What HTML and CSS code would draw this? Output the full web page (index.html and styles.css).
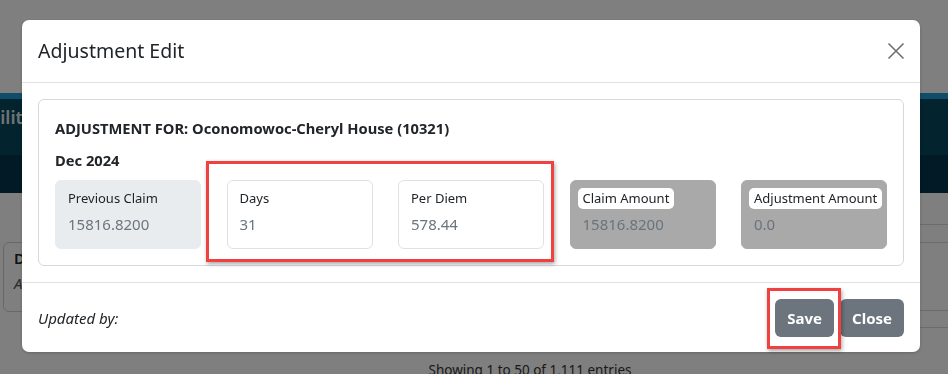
FILE: index.html
```html
<!DOCTYPE html>
<html lang="en">
<head>
<meta charset="utf-8">
<title>Adjustment Edit</title>
<link rel="stylesheet" href="styles.css">
</head>
<body>
<div class="page">
  <div class="topspace"></div>
  <div class="hero">
    <div class="hero-strip"></div>
    <div class="hero-main"><h1 class="hero-title">Facilities</h1></div>
    <div class="hero-sub"></div>
  </div>
  <div class="content">
    <div class="table-rule rule-a"></div>
    <div class="row-area">
      <div class="side-card">
        <div class="side-label">D</div>
        <div class="side-text">A</div>
      </div>
      <div class="table-rows">
        <div class="table-rule"></div>
        <div class="table-rule rule-gap"></div>
        <div class="table-rule rule-b"></div>
      </div>
    </div>
    <div class="showing">Showing 1 to 50 of 1,111 entries</div>
  </div>
</div>

<div class="backdrop"></div>

<div class="modal">
  <div class="modal-header">
    <h5 class="modal-title">Adjustment Edit</h5>
    <button class="btn-close" aria-label="Close">
      <svg width="18" height="18" viewBox="0 0 18 18"><path d="M1.5 1.5 L16.5 16.5 M16.5 1.5 L1.5 16.5" stroke="#6f6f6f" stroke-width="1.6" fill="none"/></svg>
    </button>
  </div>
  <div class="modal-body">
    <div class="card">
      <div class="card-title">ADJUSTMENT FOR: Oconomowoc-Cheryl House (10321)</div>
      <div class="card-period">Dec 2024</div>
      <div class="fields">
        <div class="field field-muted">
          <div class="field-label">Previous Claim</div>
          <div class="field-value">15816.8200</div>
        </div>
        <div class="field">
          <div class="field-label">Days</div>
          <div class="field-value">31</div>
        </div>
        <div class="field">
          <div class="field-label">Per Diem</div>
          <div class="field-value">578.44</div>
        </div>
        <div class="field field-disabled">
          <div class="field-label"><span class="pill">Claim Amount</span></div>
          <div class="field-value">15816.8200</div>
        </div>
        <div class="field field-disabled">
          <div class="field-label"><span class="pill">Adjustment Amount</span></div>
          <div class="field-value">0.0</div>
        </div>
      </div>
    </div>
  </div>
  <div class="modal-footer">
    <div class="updated">Updated by:</div>
    <div class="actions">
      <button class="btn">Save</button>
      <button class="btn">Close</button>
    </div>
  </div>
</div>

<div class="mark mark-fields"></div>
<div class="mark mark-save"></div>
</body>
</html>
```

FILE: styles.css
```css
* { box-sizing: border-box; }
html, body { margin: 0; padding: 0; }
body {
  width: 948px;
  height: 374px;
  overflow: hidden;
  background: #ffffff;
  font-family: "Noto Sans", "Open Sans", sans-serif;
  color: #212529;
  position: relative;
}
.page { width: 948px; }
.topspace { height: 93px; }
.hero-strip { height: 6px; background: #1e9ad4; }
.hero-main { height: 56px; background: #07465f; overflow: hidden; }
.hero-title {
  margin: 0;
  margin-left: -29px;
  padding-top: 6px;
  font-size: 18px;
  font-weight: 600;
  color: #dfe6ea;
  line-height: 24px;
}
.hero-sub { height: 38px; background: #04344a; }
.content { position: relative; }
.table-rule { height: 1px; background: #d9d9d9; }
.rule-a { margin-top: 31px; margin-left: 920px; }
.row-area { display: flex; margin-top: 17px; }
.side-card {
  width: 60px;
  height: 70px;
  margin-left: 3px;
  border: 1px solid #d0d0d0;
  border-radius: 6px;
  padding: 5px 0 0 10px;
  font-size: 15px;
}
.side-label { font-weight: 600; }
.side-text { font-style: italic; margin-top: 5px; color: #555; }
.table-rows { flex: 1; padding-left: 857px; }
.rule-gap { margin-top: 67px; }
.rule-b { margin-top: 16px; }
.showing {
  margin-top: 33px;
  text-align: center;
  padding-left: 112px;
  font-size: 13.5px;
  color: #333;
}

.backdrop {
  position: fixed;
  inset: 0;
  background: rgba(0, 0, 0, 0.5);
}

.modal {
  position: absolute;
  left: 22px;
  top: 20px;
  width: 898px;
  background: #fff;
  border-radius: 7px;
  box-shadow: 0 1px 3px rgba(0,0,0,0.2);
  font-family: "Noto Sans", "Open Sans", sans-serif;
}
.modal-header {
  display: flex;
  align-items: center;
  justify-content: space-between;
  height: 63px;
  padding: 0 14px 0 16px;
  border-bottom: 1px solid #dee2e6;
}
.modal-title {
  margin: 0;
  font-size: 19.5px;
  font-weight: 400;
  line-height: 30px;
  color: #212529;
}
.btn-close {
  border: 0;
  background: transparent;
  padding: 0;
  width: 20px;
  height: 20px;
  display: flex;
  align-items: center;
  justify-content: center;
}
.modal-body { padding: 16px; }
.card {
  border: 1px solid #d6d8db;
  border-radius: 6px;
  padding: 16px;
}
.card-title, .card-period {
  font-size: 14.7px;
  font-weight: 700;
  line-height: 24px;
  color: #212529;
}
.card-title { margin-bottom: 8px; }
.card-period { margin-bottom: 8px; }
.fields {
  display: grid;
  grid-template-columns: repeat(5, 146px);
  column-gap: 25.5px;
}
.field {
  height: 69px;
  border: 1px solid #dee2e6;
  border-radius: 6px;
  padding: 7px 12px 0 12px;
  background: #fff;
}
.field-muted { background: #e9ecef; border-color: #e9ecef; }
.field-disabled { background: #a9a9a9; border-color: #a9a9a9; }
.field-label {
  font-size: 13px;
  line-height: 21px;
  color: #212529;
  white-space: nowrap;
}
.field-value {
  margin-top: 4px;
  font-size: 15px;
  line-height: 22px;
  color: #6c757d;
}
.field-disabled .field-value { color: #6a737c; }
.pill {
  display: inline-block;
  background: #fff;
  border-radius: 5px;
  padding: 0 5px;
  margin-left: -5px;
}
.modal-footer {
  display: flex;
  align-items: center;
  justify-content: space-between;
  height: 70px;
  padding: 0 16px;
  border-top: 1px solid #dee2e6;
}
.updated {
  font-size: 15px;
  font-style: italic;
  color: #212529;
}
.actions { display: flex; gap: 6px; }
.btn {
  height: 38px;
  padding: 0 12px;
  border: 0;
  border-radius: 6px;
  background: #6c757d;
  color: #fff;
  font-family: inherit;
  font-size: 15px;
  font-weight: 700;
}

.mark {
  position: absolute;
  border: 3px solid #f04040;
  box-shadow: 1px 2px 4px rgba(0,0,0,0.35);
}
.mark-fields { left: 206px; top: 161px; width: 348px; height: 101px; }
.mark-save { left: 767px; top: 288px; width: 74px; height: 61px; }
```
